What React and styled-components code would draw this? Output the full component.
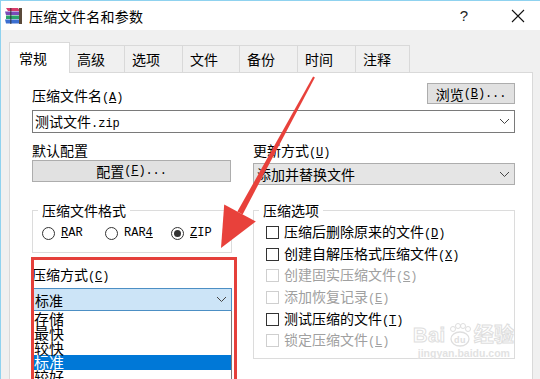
import React from 'react';
import styled, { createGlobalStyle } from 'styled-components';

const cjk = `"Noto Sans CJK SC", "Noto Sans", sans-serif`;
const mono = `"Liberation Mono", "DejaVu Sans Mono", monospace`;

const Global = createGlobalStyle`
  html, body { margin: 0; padding: 0; background: #f0f0f0; overflow: hidden; }
  #root { width: 540px; height: 379px; }
`;

const Window = styled.div`
  position: relative;
  width: 540px;
  height: 379px;
  box-sizing: border-box;
  border-left: 1px solid #8fd2ef;
  border-top: 1px solid #8fd2ef;
  background: #f0f0f0;
  overflow: hidden;
  font-family: ${cjk};
  font-size: 14px;
  color: #000;
`;

const TitleBar = styled.div`
  height: 29px;
  background: #fff;
  display: flex;
  align-items: center;
  padding-left: 3px;
`;

const Title = styled.div`
  margin-left: 6px;
  font-size: 14px;
  line-height: 20px;
  letter-spacing: 0.3px;
`;

const Controls = styled.div`
  margin-left: auto;
  display: flex;
  align-items: center;
  gap: 37px;
  padding-right: 15px;
`;

const HelpBtn = styled.div`
  width: 20px;
  text-align: center;
  font-family: "Liberation Sans", sans-serif;
  font-size: 15px;
  line-height: 20px;
  color: #222;
`;

const Body = styled.div`
  padding: 12px 0 0 8px;
`;

const TabStrip = styled.div`
  display: flex;
  align-items: flex-end;
  height: 30px;
  position: relative;
  z-index: 1;
`;

const Tab = styled.div`
  box-sizing: border-box;
  width: ${p => p.$w}px;
  height: ${p => (p.$active ? 31 : 27)}px;
  margin-bottom: ${p => (p.$active ? -1 : 0)}px;
  margin-left: ${p => (p.$first ? 0 : -1)}px;
  padding-left: ${p => (p.$active ? 9 : 7)}px;
  display: flex;
  align-items: center;
  border: 1px solid #d9d9d9;
  border-bottom: none;
  background: ${p => (p.$active ? '#fff' : '#f0f0f0')};
  font-size: 14px;
  line-height: 20px;
  position: relative;
  z-index: ${p => (p.$active ? 2 : 1)};
`;

const Panel = styled.div`
  box-sizing: border-box;
  width: 524px;
  height: 330px;
  border: 1px solid #d9d9d9;
  background: #fff;
  padding: 10px 17px 0 22px;
`;

const TopRow = styled.div`
  display: flex;
  justify-content: space-between;
  align-items: flex-end;
  height: 21px;
`;

const Label = styled.div`
  font-size: 14px;
  line-height: 16px;
  white-space: nowrap;
  margin-bottom: ${p => p.$mb ?? 0}px;
  margin-top: ${p => p.$mt ?? 0}px;
  color: ${p => (p.$disabled ? '#a3a3a3' : '#000')};
`;

const Mn = styled.span`
  font-family: ${mono};
  font-size: 12px;
  letter-spacing: -0.1px;
`;

const Button = styled.div`
  box-sizing: border-box;
  width: ${p => p.$w}px;
  height: ${p => p.$h}px;
  background: #e1e1e1;
  border: 1px solid #adadad;
  display: flex;
  align-items: center;
  justify-content: center;
  font-size: 14px;
  line-height: 16px;
  white-space: nowrap;
`;

const TextInput = styled.div`
  box-sizing: border-box;
  margin-top: 6px;
  width: 483px;
  height: 23px;
  border: 1px solid #7a7a7a;
  background: #fff;
  display: flex;
  align-items: center;
  padding: 0 4px 0 2px;
  justify-content: space-between;
`;

const Combo = styled.div`
  box-sizing: border-box;
  width: ${p => p.$w}px;
  height: ${p => p.$h}px;
  border: 1px solid ${p => (p.$focus ? '#4c8fc4' : '#adadad')};
  background: ${p => (p.$focus ? '#cce4f7' : '#e5e5e5')};
  display: flex;
  align-items: center;
  justify-content: space-between;
  padding: 0 4px 0 ${p => (p.$focus ? 2 : 3)}px;
  margin-top: ${p => p.$mt ?? 0}px;
`;

const Grid2 = styled.div`
  display: grid;
  grid-template-columns: 200px 262px;
  column-gap: 21px;
  align-items: start;
  margin-top: ${p => p.$mt}px;
`;

const Col = styled.div`
  display: flex;
  flex-direction: column;
`;

const Group = styled.fieldset`
  box-sizing: border-box;
  margin: 0;
  min-inline-size: 0;
  border: 1px solid #dcdcdc;
  padding: 0 5px ${p => p.$pb}px 5px;
`;

const Legend = styled.legend`
  padding: 0 4px 0 4px;
  font-size: 14px;
  line-height: 16px;
`;

const RadioRow = styled.div`
  display: flex;
  align-items: center;
  height: 16px;
  margin: 7px 0 0 4px;
`;

const RadioItem = styled.div`
  display: flex;
  align-items: center;
  width: ${p => (p.$w ? `${p.$w}px` : 'auto')};
  gap: 6px;
`;

const RadioCircle = styled.span`
  box-sizing: border-box;
  width: 13px;
  height: 13px;
  border-radius: 50%;
  border: 1px solid #333;
  background: #fff;
  display: flex;
  align-items: center;
  justify-content: center;
  &::after {
    content: '';
    display: ${p => (p.$on ? 'block' : 'none')};
    width: 7px;
    height: 7px;
    border-radius: 50%;
    background: #333;
  }
`;

const MonoText = styled.span`
  font-family: ${mono};
  font-size: 12px;
  line-height: 16px;
`;

const CheckList = styled.div`
  display: grid;
  grid-auto-rows: 21.6px;
  margin: 4px 0 0 7px;
`;

const CheckRow = styled.div`
  display: flex;
  align-items: center;
  gap: 5px;
  color: ${p => (p.$disabled ? '#a0a0a0' : '#000')};
  font-size: 14px;
  line-height: 16px;
  white-space: nowrap;
`;

const CheckBox = styled.span`
  box-sizing: border-box;
  width: 13px;
  height: 13px;
  border: 1px solid ${p => (p.$disabled ? '#cfcfcf' : '#333')};
  background: #fff;
  flex: none;
`;

const ListBox = styled.div`
  box-sizing: border-box;
  width: 200px;
  height: 90px;
  border: 1px solid #7a7a7a;
  border-top: none;
  background: #fff;
  padding-top: 1px;
`;

const ListItem = styled.div`
  height: 14.4px;
  line-height: 14.4px;
  font-size: 15px;
  padding-left: 1px;
  background: ${p => (p.$sel ? '#0078d7' : 'transparent')};
  color: ${p => (p.$sel ? '#fff' : '#000')};
  overflow: visible;
  white-space: nowrap;
`;

const Overlay = styled.svg`
  position: absolute;
  left: -1px;
  top: -1px;
  pointer-events: none;
`;

const RedBox = styled.div`
  position: absolute;
  left: 30px;
  top: 256px;
  width: 206px;
  height: 140px;
  box-sizing: border-box;
  border: 3px solid #e5403b;
  pointer-events: none;
`;

const Watermark = styled.div`
  position: absolute;
  left: 412px;
  top: 322px;
  display: flex;
  flex-direction: column;
  align-items: center;
  pointer-events: none;
`;

const WmTop = styled.div`
  display: flex;
  align-items: center;
  font-family: "Liberation Sans", ${cjk};
  font-weight: bold;
  font-size: 20px;
  line-height: 24px;
  color: #fff;
  -webkit-text-stroke: 1px #dedede;
  letter-spacing: 0.5px;
`;

const WmBottom = styled.div`
  font-family: "Liberation Sans", sans-serif;
  font-size: 10.5px;
  line-height: 12px;
  color: #e2e2e2;
  font-weight: bold;
`;

const Chevron = () => (
  <svg width="11" height="7" viewBox="0 0 11 7">
    <path d="M1 1 L5.5 5.5 L10 1" fill="none" stroke="#444" strokeWidth="1" />
  </svg>
);

const RarIcon = () => (
  <svg width="19" height="18" viewBox="0 0 19 18">
    <path d="M2 1 L14 1 L16 4 L4 4 Z" fill="#d63a6a" />
    <path d="M1 4.5 L15 4.5 L16 8 L2 8 Z" fill="#7a4bb8" />
    <path d="M2 8.5 L15 8.5 L15 12 L2 12 Z" fill="#2aa36b" />
    <path d="M1 12.5 L15 12.5 L16 16.5 L2 16.5 Z" fill="#3b6fd1" />
    <rect x="15" y="1" width="3" height="16" fill="#5a4a3a" />
    <rect x="6" y="1" width="1.5" height="16" fill="#2b2b2b" opacity="0.6" />
  </svg>
);

const CloseIcon = () => (
  <svg width="14" height="14" viewBox="0 0 14 14">
    <path d="M1 1 L13 13 M13 1 L1 13" stroke="#111" strokeWidth="1.1" />
  </svg>
);

const tabs = [
  ['常规', 61],
  ['高级', 56],
  ['选项', 59],
  ['文件', 58],
  ['备份', 59],
  ['时间', 59],
  ['注释', 55],
];

const checks = [
  ['压缩后删除原来的文件', 'D', false],
  ['创建自解压格式压缩文件', 'X', false],
  ['创建固实压缩文件', 'S', true],
  ['添加恢复记录', 'E', true],
  ['测试压缩的文件', 'T', false],
  ['锁定压缩文件', 'L', true],
];

const methods = ['存储', '最快', '较快', '标准', '较好', '最好'];

const Mnemonic = ({ k }) => (
  <Mn>
    (<u>{k}</u>)
  </Mn>
);

export default function App() {
  return (
    <>
      <Global />
      <Window>
        <TitleBar>
          <RarIcon />
          <Title>压缩文件名和参数</Title>
          <Controls>
            <HelpBtn>?</HelpBtn>
            <CloseIcon />
          </Controls>
        </TitleBar>
        <Body>
          <TabStrip>
            {tabs.map(([t, w], i) => (
              <Tab key={t} $w={w} $active={i === 0} $first={i === 0}>
                {t}
              </Tab>
            ))}
          </TabStrip>
          <Panel>
            <TopRow>
              <Label $mb={-2}>
                压缩文件名<Mnemonic k="A" />
              </Label>
              <Button $w={88} $h={21}>
                浏览<Mnemonic k="B" />
                <Mn>...</Mn>
              </Button>
            </TopRow>
            <TextInput>
              <span>
                测试文件<MonoText>.zip</MonoText>
              </span>
              <Chevron />
            </TextInput>
            <Grid2 $mt={9}>
              <Col>
                <Label $mb={2}>默认配置</Label>
                <Button $w={199} $h={22}>
                  配置<Mnemonic k="F" />
                  <Mn>...</Mn>
                </Button>
              </Col>
              <Col>
                <Label $mb={2}>
                  更新方式<Mnemonic k="U" />
                </Label>
                <Combo $w={262} $h={22}>
                  <span>添加并替换文件</span>
                  <Chevron />
                </Combo>
              </Col>
            </Grid2>
            <Grid2 $mt={17}>
              <Col>
                <Group $pb={11}>
                  <Legend>压缩文件格式</Legend>
                  <RadioRow>
                    <RadioItem $w={63}>
                      <RadioCircle />
                      <MonoText>
                        <u>R</u>AR
                      </MonoText>
                    </RadioItem>
                    <RadioItem $w={66}>
                      <RadioCircle />
                      <MonoText>
                        RAR<u>4</u>
                      </MonoText>
                    </RadioItem>
                    <RadioItem>
                      <RadioCircle $on />
                      <MonoText>
                        <u>Z</u>IP
                      </MonoText>
                    </RadioItem>
                  </RadioRow>
                </Group>
                <Label $mt={13}>
                  压缩方式<Mnemonic k="C" />
                </Label>
                <Combo $w={200} $h={23} $mt={3} $focus>
                  <span>标准</span>
                  <Chevron />
                </Combo>
                <ListBox>
                  {methods.map((m, i) => (
                    <ListItem key={m} $sel={i === 3}>
                      {m}
                    </ListItem>
                  ))}
                </ListBox>
              </Col>
              <Col>
                <Group $pb={6}>
                  <Legend>压缩选项</Legend>
                  <CheckList>
                    {checks.map(([t, k, d]) => (
                      <CheckRow key={t} $disabled={d}>
                        <CheckBox $disabled={d} />
                        <span>
                          {t}
                          <Mnemonic k={k} />
                        </span>
                      </CheckRow>
                    ))}
                  </CheckList>
                </Group>
              </Col>
            </Grid2>
          </Panel>
        </Body>

        <Watermark>
          <WmTop>
            Bai
            <svg width="28" height="24" viewBox="0 0 28 24">
              <ellipse cx="14" cy="16" rx="9" ry="7" fill="none" stroke="#dedede" strokeWidth="1.3" />
              <circle cx="7" cy="6" r="2.5" fill="none" stroke="#dedede" />
              <circle cx="12" cy="3" r="2.5" fill="none" stroke="#dedede" />
              <circle cx="17" cy="3" r="2.5" fill="none" stroke="#dedede" />
              <circle cx="22" cy="6" r="2.5" fill="none" stroke="#dedede" />
              <text x="8" y="20" fontSize="9" fill="#dedede" fontFamily="Liberation Sans">du</text>
            </svg>
            经验
          </WmTop>
          <WmBottom>jingyan.baidu.com</WmBottom>
        </Watermark>

        <RedBox />
        <Overlay width="540" height="379" viewBox="0 0 540 379">
          <polygon
            points="314.9,77.5 313.1,76.5 237.4,211.6 242.6,214.4"
            fill="#e8413b"
          />
          <polygon points="221,248 224.2,204.4 255.8,221.6" fill="#e8413b" />
        </Overlay>
      </Window>
    </>
  );
}
